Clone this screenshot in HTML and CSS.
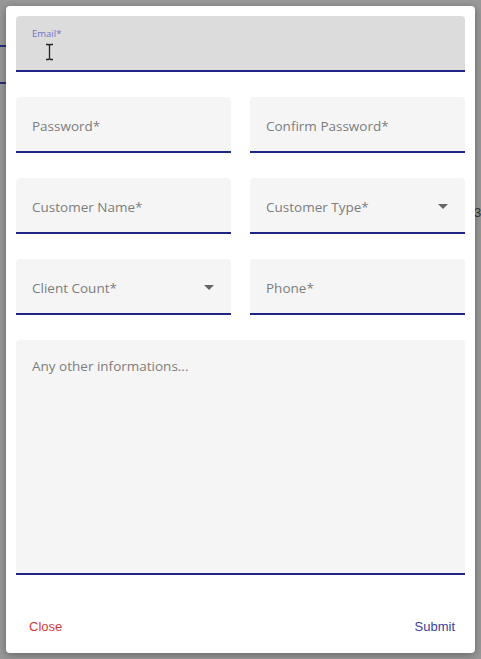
FILE: index.html
```html
<!DOCTYPE html>
<html lang="en">
<head>
  <meta charset="UTF-8">
  <meta name="viewport" content="width=device-width, initial-scale=1.0">
  <title>New customer</title>
  <link rel="stylesheet" href="styles.css">
</head>
<body>
  <span class="behind">3</span>

  <div class="dialog">
    <form class="form">
      <label class="field wide focused">
        <span class="float">Email*</span>
        <svg class="ibeam" width="9" height="18" viewBox="0 0 9 18">
          <path d="M1 1.5h2.5l1 1 1-1H8M1 16.5h2.5l1-1 1 1H8M4.5 2.5v13" fill="none" stroke="#222" stroke-width="1.3"/>
        </svg>
      </label>

      <label class="field"><span class="hint">Password*</span></label>
      <label class="field"><span class="hint">Confirm Password*</span></label>

      <label class="field"><span class="hint">Customer Name*</span></label>
      <label class="field select"><span class="hint">Customer Type*</span><span class="caret"></span></label>

      <label class="field select"><span class="hint">Client Count*</span><span class="caret"></span></label>
      <label class="field"><span class="hint">Phone*</span></label>

      <label class="field wide area"><span class="hint">Any other informations...</span></label>
    </form>

    <div class="actions">
      <button type="button" class="btn close">Close</button>
      <button type="button" class="btn submit">Submit</button>
    </div>
  </div>
</body>
</html>
```

FILE: styles.css
```css
html, body {
  height: 100%;
}

body {
  margin: 0;
  padding: 6px;
  box-sizing: border-box;
  background-color: #999;
  background-image:
    linear-gradient(#2a2f7a, #2a2f7a),
    linear-gradient(#2a2f7a, #2a2f7a);
  background-size: 6px 2px, 6px 2px;
  background-position: 0 45px, 0 82px;
  background-repeat: no-repeat;
  font-family: "Open Sans", "Noto Sans", sans-serif;
}

.behind {
  position: absolute;
  left: 474px;
  top: 205px;
  font: 13px "Liberation Sans", Arial, sans-serif;
  color: #333;
}

.dialog {
  position: relative;
  height: 647px;
  width: 469px;
  box-sizing: border-box;
  background: #fff;
  border-radius: 4px;
  box-shadow: 0 2px 8px rgba(0, 0, 0, 0.35);
  padding: 10px;
  display: flex;
  flex-direction: column;
}

.form {
  display: grid;
  grid-template-columns: 1fr 1fr;
  column-gap: 19px;
  row-gap: 25px;
}

.field {
  position: relative;
  height: 56px;
  box-sizing: border-box;
  background: #f5f5f5;
  border-radius: 4px 4px 0 0;
  border-bottom: 2px solid #1f2585;
  display: flex;
  align-items: center;
  padding: 0 16px;
}

.wide {
  grid-column: 1 / 3;
}

.focused {
  background: #dcdcdc;
}

.float {
  position: absolute;
  left: 16px;
  top: 11px;
  font-size: 9.5px;
  color: #6f72c4;
}

.ibeam {
  position: absolute;
  left: 29px;
  top: 27px;
}

.hint {
  font-size: 13.5px;
  color: #7d7d7d;
  margin-top: 3px;
}

.select {
  justify-content: space-between;
}

.caret {
  width: 0;
  height: 0;
  border-left: 5px solid transparent;
  border-right: 5px solid transparent;
  border-top: 5px solid #666;
  margin: 2px 1px 0 0;
}

.area {
  height: 235px;
  align-items: flex-start;
  padding-top: 16px;
}

.area .hint {
  margin-top: 1px;
}

.actions {
  margin-top: auto;
  display: flex;
  justify-content: space-between;
  padding: 0 0 1px;
}

.btn {
  background: none;
  border: 0;
  padding: 8px 10px;
  font: 13px "Liberation Sans", Arial, sans-serif;
  cursor: pointer;
}

.btn.close {
  color: #d23a3a;
  padding-left: 13px;
}

.btn.submit {
  color: #3b3f9e;
}
```
